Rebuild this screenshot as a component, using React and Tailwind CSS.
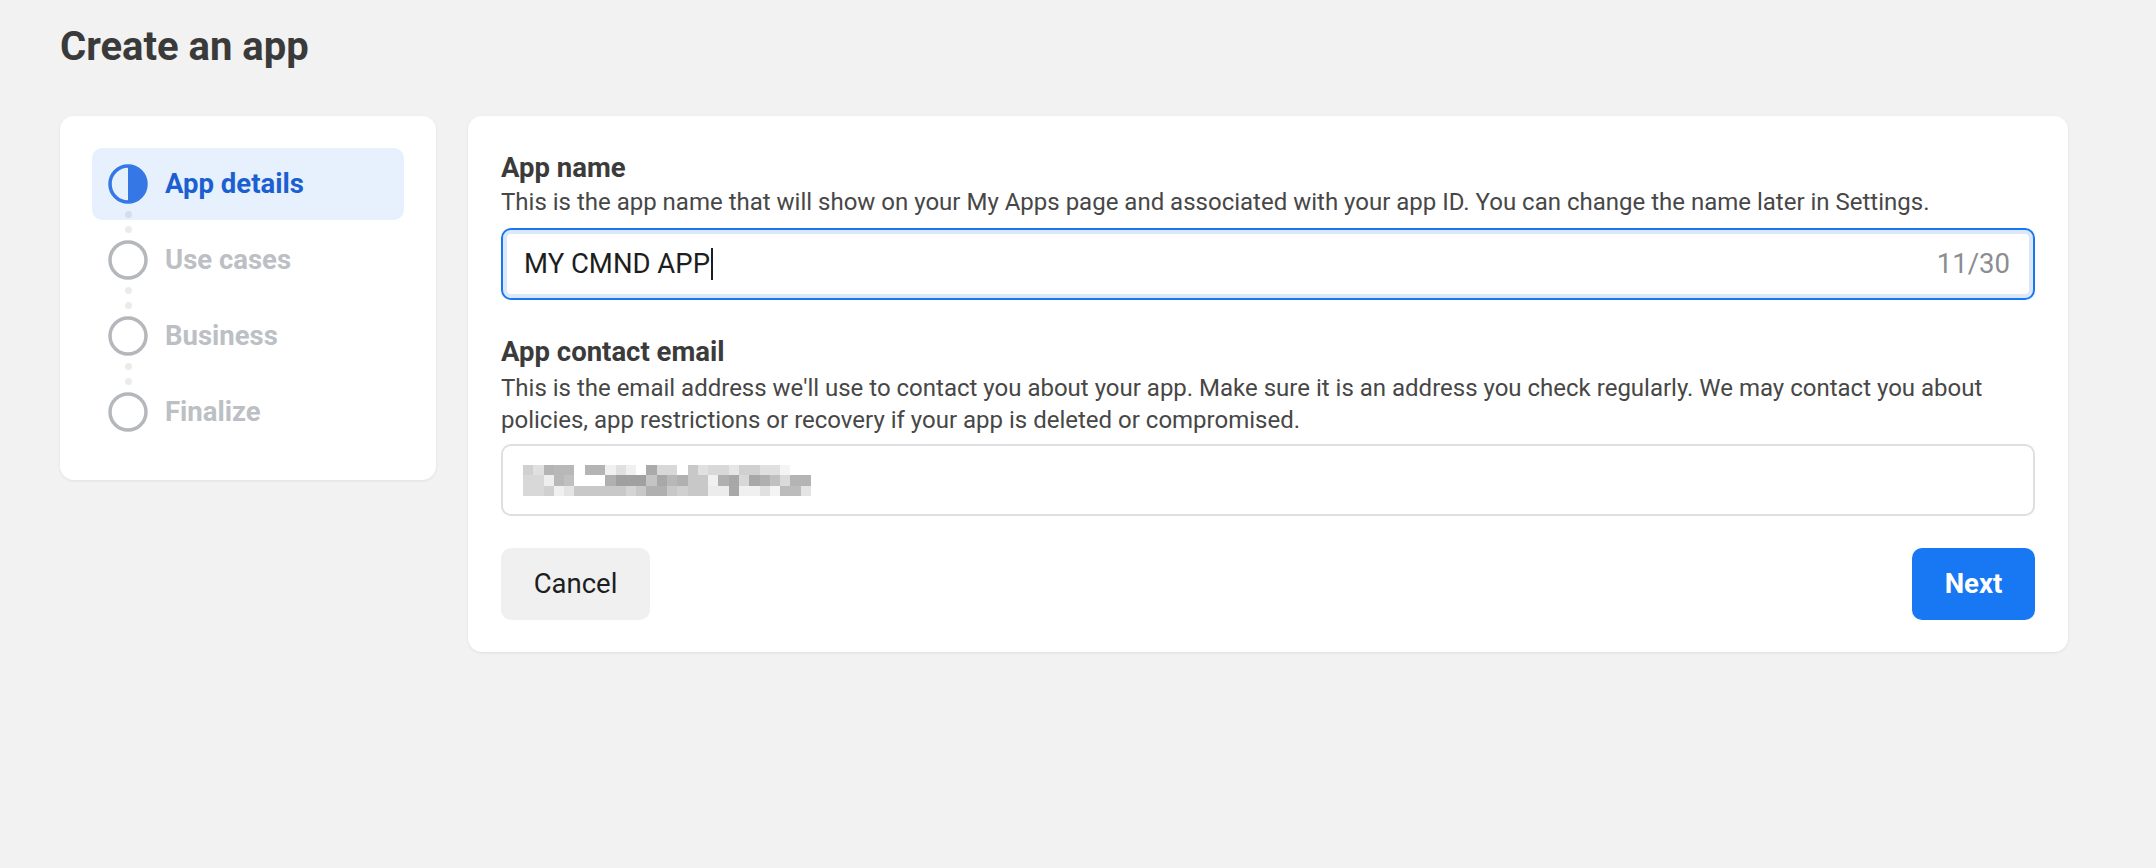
import React from "react";

const steps = [
  { label: "App details", active: true },
  { label: "Use cases" },
  { label: "Business" },
  { label: "Finalize" },
];

// pixelated (redacted) email address
const mosaic = [
  ["d0", "e0", "b4", "b8", "b8", "ff", "b4", "b4", "f0", "e0", "f0", "ff", "aa", "d8", "d8", "ff", "c8", "e0", "d8", "d8", "e6", "d0", "d0", "e0", "e0", "f4", "ff", "ff"],
  ["d8", "d8", "ee", "b8", "c0", "ff", "ff", "ff", "b0", "a0", "a0", "a0", "c4", "a8", "b8", "b0", "c8", "c8", "f0", "b0", "a8", "d8", "a8", "b0", "c0", "da", "b4", "b4"],
  ["d8", "d8", "d0", "f0", "e4", "c8", "c8", "c8", "c8", "c8", "d4", "c8", "b0", "b0", "c8", "d0", "c8", "c8", "ec", "ec", "a8", "f0", "f0", "e0", "f4", "bc", "bc", "e4"],
];

function StepIcon({ active }) {
  if (active) {
    return (
      <svg width="40" height="40" viewBox="0 0 40 40" className="shrink-0">
        <circle cx="20" cy="20" r="18" fill="none" stroke="#3578e5" strokeWidth="3.5" />
        <path d="M20 2 A18 18 0 0 1 20 38 Z" fill="#3578e5" />
      </svg>
    );
  }
  return (
    <svg width="40" height="40" viewBox="0 0 40 40" className="shrink-0">
      <circle cx="20" cy="20" r="18" fill="none" stroke="#b4b7bb" strokeWidth="3.5" />
    </svg>
  );
}

function Stepper() {
  return (
    <div className="w-[376px] shrink-0 rounded-[14px] bg-white p-[32px] shadow-[0_1px_3px_rgba(0,0,0,0.08)]">
      <div className="flex flex-col gap-[4px]">
        {steps.map((s, i) => (
          <div
            key={s.label}
            className={
              "relative flex h-[72px] items-center gap-[17px] rounded-[10px] pl-[16px] " +
              (s.active ? "bg-[#e7f0fd]" : "")
            }
          >
            <StepIcon active={s.active} />
            <span
              className={
                "text-[27.5px] font-bold " + (s.active ? "text-[#1b5fd0]" : "text-[#bcc0c4]")
              }
            >
              {s.label}
            </span>
            {i < steps.length - 1 && (
              <>
                <span className="absolute left-[32.5px] top-[62.5px] h-[7px] w-[7px] rounded-full bg-[rgba(0,0,0,0.08)]" />
                <span className="absolute left-[32.5px] top-[77.5px] h-[7px] w-[7px] rounded-full bg-[rgba(0,0,0,0.08)]" />
              </>
            )}
          </div>
        ))}
      </div>
    </div>
  );
}

export default function App() {
  return (
    <div className="min-h-screen bg-[#f2f2f2] px-[60px] pt-[23px] font-['Roboto','Liberation_Sans',sans-serif]">
      <h1 className="text-[40px] font-bold leading-[48px] text-[#3a3a3a]">Create an app</h1>

      <div className="mt-[45px] flex items-start gap-[32px]">
        <Stepper />

        <div className="w-[1600px] rounded-[14px] bg-white px-[33px] pb-[32px] pt-[35px] shadow-[0_1px_3px_rgba(0,0,0,0.08)]">
          <div className="text-[27.5px] font-bold leading-[33px] text-[#3b3b3b]">App name</div>
          <p className="mt-[2px] text-[24px] leading-[32px] text-[#474747]">
            This is the app name that will show on your My Apps page and associated with your app ID. You can change the name later in Settings.
          </p>
          <div className="mt-[10px] flex h-[72px] items-center justify-between rounded-[10px] border-2 border-[#1877f2] pl-[21px] pr-[23px] shadow-[inset_0_0_0_4px_#dbe7fb]">
            <div className="flex items-center">
              <span className="text-[27.5px] text-[#1c1e21]">MY CMND APP</span>
              <span className="ml-[1px] h-[32px] w-[2px] bg-[#1c1e21]" />
            </div>
            <span className="text-[27.5px] text-[#8a8d91]">11/30</span>
          </div>

          <div className="mt-[35px] text-[27.5px] font-bold leading-[33px] text-[#3b3b3b]">App contact email</div>
          <p className="mt-[4px] text-[24px] leading-[32px] text-[#474747]">
            This is the email address we'll use to contact you about your app. Make sure it is an address you check regularly. We may contact you about policies, app restrictions or recovery if your app is deleted or compromised.
          </p>
          <div className="mt-[8px] flex h-[72px] items-center rounded-[10px] border-2 border-[#dddfe2] pl-[20px]">
            <svg width="288" height="31" viewBox="0 0 28 3" preserveAspectRatio="none" shapeRendering="crispEdges">
              {mosaic.map((row, r) =>
                row.map((c, x) => <rect key={r + "-" + x} x={x} y={r} width="1" height="1" fill={"#" + c + c + c} />)
              )}
            </svg>
          </div>

          <div className="mt-[32px] flex items-center justify-between">
            <button className="h-[72px] w-[149px] rounded-[10px] bg-[#f0f0f0] text-[27.5px] text-[#1c1e21]">Cancel</button>
            <button className="h-[72px] w-[123px] rounded-[10px] bg-[#1877f2] text-[27.5px] font-bold text-white">Next</button>
          </div>
        </div>
      </div>
    </div>
  );
}
